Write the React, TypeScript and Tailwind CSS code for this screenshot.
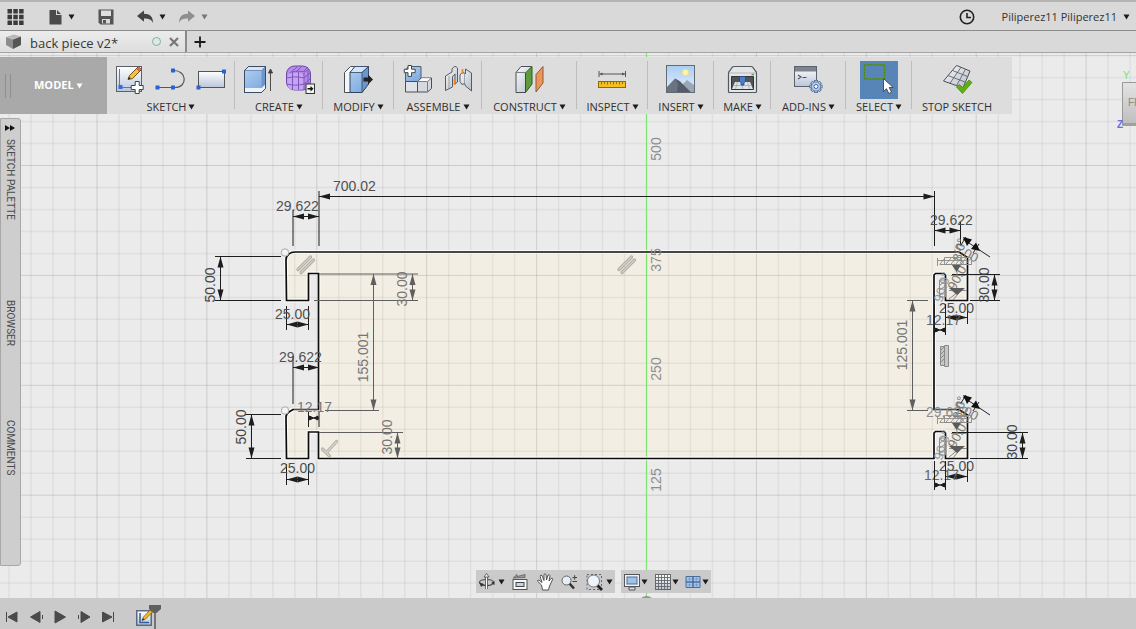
import React from "react";

const Caret = ({ className = "fill-[#1c1c1c]" }: { className?: string }) => (
  <svg width="7" height="6" viewBox="0 0 7 6" className={className} aria-hidden="true">
    <path d="M.5 .5h6l-3 5z" />
  </svg>
);

const Icon = ({ children, size = 32 }: { children: React.ReactNode; size?: number }) => (
  <svg width={size} height={size} viewBox={`0 0 ${size} ${size}`} fill="none" aria-hidden="true" className="block shrink-0">
    {children}
  </svg>
);

const Gradients = () => (
  <svg width="0" height="0" className="absolute" aria-hidden="true">
    <defs>
      <linearGradient id="paper" x1="0" y1="0" x2="0" y2="1">
        <stop offset="0" stopColor="#ffffff" />
        <stop offset="1" stopColor="#b9c6da" />
      </linearGradient>
      <linearGradient id="blue" x1="0" y1="0" x2="0.6" y2="1">
        <stop offset="0" stopColor="#b4d0f2" />
        <stop offset="1" stopColor="#7fabdf" />
      </linearGradient>
      <linearGradient id="steel" x1="0" y1="0" x2="1" y2="1">
        <stop offset="0" stopColor="#fafbfc" />
        <stop offset="1" stopColor="#b4bcc6" />
      </linearGradient>
      <linearGradient id="sky" x1="0" y1="0" x2="0" y2="1">
        <stop offset="0" stopColor="#a9cdf3" />
        <stop offset="1" stopColor="#e6f1fb" />
      </linearGradient>
      <linearGradient id="cube" x1="0" y1="0" x2="0" y2="1">
        <stop offset="0" stopColor="#e4e4e4" />
        <stop offset="1" stopColor="#bcbcbc" />
      </linearGradient>
    </defs>
  </svg>
);

/* ---------- ribbon icons ---------- */

const CreateSketch = () => (
  <Icon>
    <rect x="2.500" y="2.500" width="25" height="25" fill="url(#paper)" stroke="#5b6069" />
    <path d="M5.500 5v18.500H20" stroke="#6f757f" />
    <rect x="4.500" y="21" width="4" height="4" fill="#2e6fe0" />
    <path d="M14 15.500l1.500-4L24 3l3 3-8.500 8.500z" fill="#f5c23a" stroke="#5b4412" strokeWidth=".9" />
    <path d="M22.500 4.500L24.500 2.500l3 3-2 2z" fill="#e06a5a" stroke="#6d2e26" strokeWidth=".6" />
    <path d="M14 15.500l1-2.700 1.700 1.700z" fill="#222" />
    <path d="M21.200 17.500h4v4h4v4h-4v4h-4v-4h-4v-4h4z" fill="#fff" stroke="#444" />
  </Icon>
);

const ArcTool = () => (
  <Icon>
    <path d="M3 23.500h17c13 0 12-17.500-1.500-17" stroke="#54585f" strokeWidth="1.200" />
    <path d="M.5 21.500h4v4h-4zM16 21.500h4v4h-4zM16 4.500h4v4h-4z" fill="#2a62cf" />
  </Icon>
);

const RectTool = () => (
  <Icon>
    <rect x="2.500" y="7.500" width="26" height="16" fill="url(#paper)" stroke="#50545b" />
    <path d="M.5 21.500h4v4h-4zM26 5.500h4v4h-4z" fill="#2a62cf" />
  </Icon>
);

const Extrude = () => (
  <Icon>
    <path d="M1.500 6.500l4-4h17v22l-4 4h-17z" fill="url(#blue)" stroke="#30445f" />
    <path d="M2 24h16.500l4-4v4.500l-4 3.500H2z" fill="#eef3f9" />
    <path d="M1.500 6.500l4-4h17l-4 4z" fill="#d6e6fa" stroke="#5a7190" strokeWidth=".7" />
    <path d="M18.500 6.500l4-4V20l-4 4z" fill="#6d97cb" />
    <path d="M1.500 6.500l4-4h17v22l-4 4h-17z" stroke="#3b4c64" />
    <path d="M27.500 27V6M25.500 9l2-4 2 4z" stroke="#3d3d3d" fill="#3d3d3d" strokeWidth=".9" />
  </Icon>
);

const FormTool = () => (
  <Icon>
    <rect x="2.500" y="2" width="24" height="24" rx="8" fill="#b58cea" stroke="#6c45a6" />
    <path d="M3 15q0-6 5-6h7q5 0 5 6v10q-8 2-14 0-3-2-3-10z" fill="#c7a3f5" />
    <path d="M3 14c6-1.500 11-1.500 17 0l6-5M3 20c6 1.500 11 1.500 17 0l6-5M8 8c5-1 8-1 13 0l4-3M8.500 8v18M14.500 8v18M20 9v17M24 6v17M6 9l7-6M12 8l6-6M19 8l5-5" stroke="#7d56b8" />
    <rect x="22" y="20" width="8.500" height="9.500" fill="#f3f3f3" stroke="#333" />
    <path d="M23.500 24h3v-2l3 2.800-3 2.800v-2h-3z" fill="#111" />
  </Icon>
);

const PressPull = () => (
  <Icon>
    <path d="M1.500 8.500l6-6h5l-5 6v20h-6z" fill="#f4f6f8" stroke="#4a4f57" />
    <path d="M7 8.500l5-6h13.500V20l-6.500 8.500H7z" fill="url(#blue)" stroke="#30445f" />
    <path d="M7 8.500l5-6h13.500l-6.500 6z" fill="#d6e6fa" stroke="#30445f" strokeWidth=".8" />
    <path d="M19 8.500l6.500-6V20L19 28.500z" fill="#6d97cb" stroke="#30445f" strokeWidth=".8" />
    <path d="M20.500 13.500h4.500V10.500l5 5-5 5v-3h-4.500z" fill="#222" />
  </Icon>
);

const NewComponent = () => (
  <Icon>
    <path d="M3.500 6l3-3.500H19v11l-2 4H3.500z" fill="url(#blue)" stroke="#4a5a70" />
    <path d="M3.500 17.500h12v10.500h-12z" fill="#dfe2e7" stroke="#4a4f57" />
    <path d="M15.500 17.500l4-3.500h10v10.500l-4 3.500h-10z" fill="#d6dae0" stroke="#4a4f57" />
    <path d="M15.500 17.500h10l4-3.500M25.500 17.500V28" stroke="#7a8089" />
    <path d="M16.500 17l3.500-2.700h8.500L25 17z" fill="#fff" />
    <path d="M6 1.500h3.500v3.700h3.700v3.500H9.500v3.700H6V8.700H2.300V5.200H6z" fill="#fff" stroke="#444" />
  </Icon>
);

const Joint = () => (
  <Icon>
    <path d="M2.500 12l6.500-4V5q3-4.500 5.500-1V18l-2.500 2V10L9.500 13v10L2.500 26.500z" fill="url(#steel)" stroke="#555b64" />
    <path d="M17 11q2-4 4.500-2l1 1V5l6 4v18L22 21.500V19.500l-3 1-2-3z" fill="url(#steel)" stroke="#555b64" />
    <path d="M11.500 15v6M19.500 5v5" stroke="#ef8a2c" strokeWidth="1.800" />
    <path d="M21.500 10v11M6 12v12" stroke="#8a919a" strokeWidth=".8" />
  </Icon>
);

const Construct = () => (
  <Icon>
    <path d="M2 8.500l5-6h11L11.500 8.500v20H2z" fill="url(#steel)" stroke="#4a4f57" />
    <path d="M11.500 8.500L18 2.500V20l-6.500 8.500z" fill="#5c9c3f" stroke="#33581f" />
    <path d="M2 8.500h9.500L17.500 2.500" stroke="#7a8089" />
    <path d="M22 10.500l7-8V19l-7 9z" fill="#ef955a" stroke="#8b5a38" />
  </Icon>
);

const Inspect = () => (
  <Icon>
    <path d="M2 7v6M28.500 7v6M2.500 10h26" stroke="#555" />
    <path d="M2.500 10l3-1.500v3zM28 10l-3-1.500v3z" fill="#555" />
    <rect x="1.500" y="17.500" width="27" height="6" fill="#f5c01e" stroke="#8d6a0a" />
    <path d="M4.500 18v2.500M7.500 18v2M10.500 18v2.500M13.500 18v2M16.500 18v2.500M19.500 18v2M22.500 18v2.500M25.500 18v2" stroke="#8a6a10" strokeWidth=".9" />
  </Icon>
);

const InsertImage = () => (
  <Icon>
    <rect x="1.500" y="1.500" width="28" height="27" fill="url(#sky)" stroke="#646a73" />
    <circle cx="20.500" cy="8.500" r="3.200" fill="#fff3b0" stroke="#f0d873" strokeWidth=".8" />
    <path d="M14 24l8-8 7 5v7H14z" fill="#9aa7b8" />
    <path d="M2 23l8-8.500 5 3L26 28H2z" fill="#6a7382" />
    <path d="M10 14.500l3 5-1 8.500h13L15 17.500z" fill="#545c6a" />
  </Icon>
);

const Make = () => (
  <Icon>
    <path d="M1.500 9.500q0-1.500 1-2.500l3-4q.6-.5 1.500-.5h17q.9 0 1.500.5l3 4q1 1 1 2.500v18q0 1-1 1h-26q-1 0-1-1z" fill="#e3e5e8" stroke="#55595f" strokeWidth="1.200" />
    <path d="M2 9h27" stroke="#b4b8bd" />
    <path d="M4.500 12.500h22v13h-22z" fill="#50545a" stroke="#333" />
    <path d="M8 18h15l3 7H5z" fill="#dfe3e8" />
    <path d="M10.500 18l-2 7M15.500 18v7M20.500 18l2 7M7 21.500h17" stroke="#9aa0a8" strokeWidth=".7" />
    <path d="M12.500 12.500h6v5l-1.500 1V21h-3v-2.500l-1.500-1z" fill="#4a7fd0" stroke="#254577" strokeWidth=".8" />
    <rect x="24.500" y="9.800" width="2.500" height="1.500" fill="#4caf2a" />
  </Icon>
);

const AddIns = () => (
  <Icon>
    <rect x="1.500" y="2.500" width="22" height="20" fill="url(#paper)" stroke="#5d636c" />
    <rect x="2" y="3" width="21" height="4.500" fill="#7d848e" />
    <path d="M5 11l3 2-3 2M9.500 13.500h4" stroke="#555" strokeWidth="1.200" />
    <path d="M23 16v13M16.500 22.500h13M18.400 17.900l9.200 9.200M27.600 17.900l-9.200 9.200" stroke="#44618d" strokeWidth="3.600" />
    <path d="M23 16.700v11.600M17.200 22.500h11.600M18.900 18.400l8.200 8.200M27.100 18.400l-8.200 8.200" stroke="#bcd3f2" strokeWidth="2.200" />
    <circle cx="23" cy="22.500" r="4.500" fill="#bcd3f2" stroke="#44618d" strokeWidth=".7" />
    <circle cx="23" cy="22.500" r="2" fill="#fff" stroke="#44618d" />
  </Icon>
);

const Select = () => (
  <Icon>
    <rect x="1.500" y="1" width="20" height="14" stroke="#5b9226" strokeWidth="1.700" />
    <path d="M1.500 1h20v14h-20z" stroke="#41701a" strokeDasharray="1 2" strokeWidth=".6" />
    <path d="M20.500 14.500v13l3-2.800 2.300 4.800 2.700-1.300-2.300-4.700h4z" fill="#fff" stroke="#444" strokeWidth=".9" />
  </Icon>
);

const StopSketch = () => (
  <Icon>
    <path d="M15.500 1.500L29 7 22 24 2.500 17z" fill="url(#steel)" stroke="#4a4f56" />
    <path d="M20 3.300L9 19.300M24.500 5.200L15.500 21.700M11.500 6.500l15 6M7 11.500l17 6.500" stroke="#5d636b" strokeWidth=".9" />
    <path d="M15.500 23l3-2.500 3 3L28 16l3 2.500L21.500 29.500z" fill="#5fae12" stroke="#4b8c0e" strokeWidth=".8" />
  </Icon>
);

type Tool = { name: string; icon: React.ReactNode; active?: boolean };
type Group = { label: string; width: string; menu: boolean; tools: Tool[] };

const groups: Group[] = [
  {
    label: "SKETCH",
    width: "w-32",
    menu: true,
    tools: [
      { name: "Create sketch", icon: <CreateSketch /> },
      { name: "Line", icon: <ArcTool /> },
      { name: "Rectangle", icon: <RectTool /> },
    ],
  },
  {
    label: "CREATE",
    width: "w-[88px]",
    menu: true,
    tools: [
      { name: "Extrude", icon: <Extrude /> },
      { name: "Form", icon: <FormTool /> },
    ],
  },
  { label: "MODIFY", width: "w-[71px]", menu: true, tools: [{ name: "Press pull", icon: <PressPull /> }] },
  {
    label: "ASSEMBLE",
    width: "w-[88px]",
    menu: true,
    tools: [
      { name: "New component", icon: <NewComponent /> },
      { name: "Joint", icon: <Joint /> },
    ],
  },
  { label: "CONSTRUCT", width: "w-[95px]", menu: true, tools: [{ name: "Offset plane", icon: <Construct /> }] },
  { label: "INSPECT", width: "w-[71px]", menu: true, tools: [{ name: "Measure", icon: <Inspect /> }] },
  { label: "INSERT", width: "w-[66px]", menu: true, tools: [{ name: "Attached canvas", icon: <InsertImage /> }] },
  { label: "MAKE", width: "w-[57px]", menu: true, tools: [{ name: "3D print", icon: <Make /> }] },
  { label: "ADD-INS", width: "w-[75px]", menu: true, tools: [{ name: "Scripts and add-ins", icon: <AddIns /> }] },
  { label: "SELECT", width: "w-[66px]", menu: true, tools: [{ name: "Select", icon: <Select />, active: true }] },
  { label: "STOP SKETCH", width: "w-[90px]", menu: false, tools: [{ name: "Stop sketch", icon: <StopSketch /> }] },
];

const RibbonGroup = ({ group, last }: { group: Group; last: boolean }) => (
  <div className={`${group.width} relative flex shrink-0 flex-col items-center pt-1`}>
    <div className="flex h-[38px] items-center gap-[9px]">
      {group.tools.map((t) => (
        <button
          key={t.name}
          type="button"
          aria-label={t.name}
          className={t.active ? "flex size-[38px] items-center justify-center bg-[#5785b8]" : "block"}
        >
          {t.icon}
        </button>
      ))}
    </div>
    <button type="button" className="mt-0.5 flex items-center gap-0.5 text-[11px] leading-3 whitespace-nowrap text-[#303030]">
      {group.label}
      {group.menu && <Caret />}
    </button>
    {!last && <span className="absolute top-1 right-0 h-12 w-px bg-[#bdbdbd]" />}
  </div>
);

/* ---------- sketch drawing ---------- */

const dark = "#1d1d1d";
const soft = "#5f5f5f";

const Arrow = ({ x, y, angle, color }: { x: number; y: number; angle: number; color: string }) => (
  <path d="M0 0l-11-3v6z" fill={color} transform={`translate(${x} ${y}) rotate(${angle})`} />
);

type HProps = { x1: number; x2: number; y: number; label: string; tx: number; ty: number; e1?: [number, number]; e2?: [number, number]; color?: string };
const HDim = ({ x1, x2, y, label, tx, ty, e1, e2, color = dark }: HProps) => (
  <g>
    <path
      d={`M${x1} ${y}H${x2}${e1 ? `M${x1} ${e1[0]}V${e1[1]}` : ""}${e2 ? `M${x2} ${e2[0]}V${e2[1]}` : ""}`}
      stroke={color}
      fill="none"
    />
    <Arrow x={x1} y={y} angle={180} color={color} />
    <Arrow x={x2} y={y} angle={0} color={color} />
    <text x={tx} y={ty} fill={color === dark ? "#505050" : "#7c7c7c"}>
      {label}
    </text>
  </g>
);

type VProps = { x: number; y1: number; y2: number; label: string; tx: number; ty: number; e1?: [number, number]; e2?: [number, number]; color?: string };
const VDim = ({ x, y1, y2, label, tx, ty, e1, e2, color = dark }: VProps) => (
  <g>
    <path
      d={`M${x} ${y1}V${y2}${e1 ? `M${e1[0]} ${y1}H${e1[1]}` : ""}${e2 ? `M${e2[0]} ${y2}H${e2[1]}` : ""}`}
      stroke={color}
      fill="none"
    />
    <Arrow x={x} y={y1} angle={-90} color={color} />
    <Arrow x={x} y={y2} angle={90} color={color} />
    <text transform={`translate(${tx} ${ty}) rotate(-90)`} textAnchor="middle" fill={color === dark ? "#444" : "#767676"}>
      {label}
    </text>
  </g>
);

const ShortDim = ({ x1, x2, y, top, bottom }: { x1: number; x2: number; y: number; top: number; bottom: number }) => (
  <path
    d={`M${x1} ${top}V${bottom}M${x2} ${top}V${bottom}M${x1} ${y}H${x2}M${x1 + 1} ${y - 2}v4l4-2zM${x2 - 1} ${y - 2}v4l-4-2z`}
    stroke={dark}
    fill={dark}
  />
);

const profile =
  "M295 252H959L967.500 257.500V300.500H945.500V275L944 273.500H935.500L934 275V409.500H959L967.500 415V458.500H945.500V433L944 431.500H935.500L934 433V458.500H318.500V432H308.500V458.500H286.500L286 417Q286 414 289 412L293 409.500H318.500V273.500H308.500V300.500H286.500L286 260Q286 256 289 254Q291 252 295 252Z";

const ParallelMark = ({ x, y }: { x: number; y: number }) => (
  <g transform={`translate(${x} ${y})`} strokeLinecap="round">
    <path d="M-7 5.500L5.500-7M-4 8.500L8.500-4" stroke="#b0ada5" strokeWidth="3.200" />
    <path d="M-7 5.500L5.500-7M-4 8.500L8.500-4" stroke="#d3d0c8" strokeWidth="1.200" />
  </g>
);

const CornerDetail = ({ dy }: { dy: number }) => (
  <g transform={`translate(0 ${dy})`}>
    <g fill="#777" fontSize="13">
      <text transform="translate(961 262) rotate(-76)">8.0°</text>
      <text transform="translate(953 251) rotate(28)">5.00</text>
      <text transform="translate(955 291) rotate(-62)">90.0°</text>
      <text transform="translate(942 303) rotate(-72)" fill="#999">
        90.0°
      </text>
    </g>
    <g stroke="#8a8a8a" fill="none">
      <path
        d="M937.500 260.500h30M939.500 264.500h32M944.500 257.500h27v7h-27zM940 264l5-6M946 264l5-6M951 264l5-6M956 264l5-6M961 264l5-6M966 264l5-6M937.500 258v8"
        strokeWidth=".9"
      />
      <path d="M939.500 280v17h6v-17zM940 285l5-4M940 290l5-4M940 295l5-4" />
      <path d="M957 264v11M949 290.500h18M949 299l14-11M953 300l10-12M951 275.500h15" />
    </g>
    <path d="M952 265h9l-4.500 7zM949 288h16l-8 7z" fill="#5b5b5b" />
    <path d="M963 239l27 18M961 245l5-8M973 253l6-9" stroke="#222" />
    <path d="M963 237l9 2.500-5 6.500zM980 251l-9-2 5-6.500z" fill="#111" />
  </g>
);

const SketchCanvas = () => {
  const s = 21.98;
  const cols = Array.from({ length: 52 }, (_, i) => i - 4);
  const rows = Array.from({ length: 26 }, (_, i) => i - 5);
  return (
    <svg
      viewBox="0 53 1136 545"
      preserveAspectRatio="xMidYMid slice"
      className="absolute inset-0 h-full w-full bg-[#ebebeb] font-['Liberation_Sans',Arial,sans-serif]"
      fontSize="14"
      fill="none"
      role="img"
      aria-label="Sketch"
    >
      <path d={profile} fill="#f3eee3" />
      <g stroke="#000">
        {cols.map((i) => (
          <path key={i} d={`M${97 + i * s} 53V598`} strokeOpacity={i % 5 === 0 ? 0.13 : 0.05} strokeWidth={i % 5 === 0 ? 1 : 1.5} />
        ))}
        {rows.map((i) => (
          <path key={i} d={`M0 ${165.5 + i * s}H1136`} strokeOpacity={i % 5 === 0 ? 0.13 : 0.05} strokeWidth={i % 5 === 0 ? 1 : 1.5} />
        ))}
      </g>
      <path d="M646.500 53V598" stroke="#7be66e" strokeWidth="1.200" />
      <path d="M641 598q5.500-4 11 0z" fill="#8d9a8d" />
      <path d={profile} stroke="#fff" strokeWidth="4" strokeOpacity=".75" />
      <path d={profile} stroke="#0b0b0b" strokeWidth="1.700" />
      <path d="M294 409.500h24M935 409.500h22" stroke="#24539f" strokeWidth="1.200" />

      <g fill="#8e8e8e">
        {[
          ["500", 149],
          ["375", 260],
          ["250", 369],
          ["125", 480],
        ].map(([t, y]) => (
          <text key={t} transform={`translate(661 ${y}) rotate(-90)`} textAnchor="middle">
            {t}
          </text>
        ))}
      </g>

      <HDim x1={319} x2={934.5} y={196.5} label="700.02" tx={333} ty={191} e1={[191, 246]} e2={[191, 246]} />
      <HDim x1={293} x2={319} y={216.5} label="29.622" tx={276} ty={211} e1={[210, 246]} />
      <VDim x={220.5} y1={256.5} y2={300.5} label="50.00" tx={215} ty={285} e1={[215, 281]} e2={[215, 281]} />
      <HDim x1={286.5} x2={308.5} y={324.5} label="25.00" tx={275} ty={319} e1={[306, 330]} e2={[306, 330]} />
      <VDim x={412.5} y1={274} y2={300.5} label="30.00" tx={407} ty={289} e1={[319, 418]} e2={[314, 418]} color={soft} />
      <VDim x={373.5} y1={274} y2={410.5} label="155.001" tx={368} ty={357} e2={[325, 379]} color={soft} />
      <HDim x1={293} x2={319} y={367.5} label="29.622" tx={279} ty={362} e1={[356, 404]} />
      <text x="297" y="412" fill="#777">
        12.17
      </text>
      <ShortDim x1={308.5} x2={319} y={418} top={412} bottom={427} />
      <VDim x={251.5} y1={414.5} y2={458.5} label="50.00" tx={246} ty={427} e1={[245, 281]} e2={[246, 281]} />
      <HDim x1={286.5} x2={308.5} y={479.5} label="25.00" tx={280} ty={473} e1={[464, 485]} e2={[464, 485]} />
      <VDim x={397.5} y1={432.5} y2={458.5} label="30.00" tx={392} ty={437} e1={[319, 403]} color={soft} />

      <VDim x={912.5} y1={300.5} y2={410.5} label="125.001" tx={907} ty={345} e1={[907, 928]} e2={[907, 928]} color={soft} />
      <HDim x1={934.5} x2={960.5} y={230.5} label="29.622" tx={930} ty={225} e2={[222, 246]} />
      <VDim x={994.5} y1={274.5} y2={300.5} label="30.00" tx={989} ty={285} e1={[952, 1000]} e2={[970, 1000]} />
      <HDim x1={945.5} x2={967.5} y={317.5} label="25.00" tx={939} ty={313} e2={[304, 324]} />
      <text x="926" y="325" fill="#666">
        12.17
      </text>
      <ShortDim x1={934.5} x2={945.5} y={330} top={304} bottom={335} />
      <VDim x={1022.5} y1={432.5} y2={458.5} label="30.00" tx={1017} ty={442} e1={[952, 1028]} e2={[970, 1028]} />
      <HDim x1={945.5} x2={967.5} y={476.5} label="25.00" tx={939} ty={471} e2={[462, 482]} />
      <text x="924" y="480" fill="#666">
        12.17
      </text>
      <ShortDim x1={934.5} x2={945.5} y={485} top={461} bottom={490} />
      <text x="926" y="417" fill="#8d8d8d">
        29.622
      </text>
      <CornerDetail dy={0} />
      <CornerDetail dy={158} />

      <circle cx="285" cy="252.500" r="3.700" fill="#f4f4f4" stroke="#a9a9a9" />
      <circle cx="285" cy="410.500" r="3.700" fill="#f4f4f4" stroke="#a9a9a9" />
      <ParallelMark x={305} y={264} />
      <ParallelMark x={626} y={264} />
      <g strokeLinecap="round">
        <path d="M322.500 449l7 7M326.500 452.500L336.500 441.500" stroke="#b3b0a8" strokeWidth="3.200" />
        <path d="M322.500 449l7 7M326.500 452.500L336.500 441.500" stroke="#d6d3cb" strokeWidth="1.200" />
      </g>
      <path d="M940.500 346.500h4v19h-4zM944.500 345.500h4v21h-4zM941 350l3-3M941 354l3-3M941 358l3-3M941 362l3-3" fill="#c6c6c6" stroke="#8b8b8b" />
    </svg>
  );
};

/* ---------- view controls ---------- */

const Orbit = () => (
  <Icon size={18}>
    <ellipse cx="8.500" cy="9.500" rx="7" ry="3" stroke="#444" strokeWidth="1.200" />
    <path d="M8.500 3v13" stroke="#444" strokeWidth="2.800" />
    <path d="M8.500 2v14" stroke="#fff" strokeWidth="1.300" />
    <path d="M8.500 .5l2.500 3.500H6z" fill="#fff" stroke="#444" strokeWidth=".8" />
    <path d="M1.500 9.500l4.500 1.500-3 3zM16.500 8v4l-3.500-2z" fill="#333" />
  </Icon>
);
const LookAt = () => (
  <Icon size={18}>
    <rect x="1" y="6.500" width="14" height="10" fill="#f6f6f6" stroke="#555" />
    <rect x="4" y="9.500" width="8" height="4" fill="#c3d3ea" stroke="#444" />
    <path d="M1 5l4-3.500v2l8-2v3z" fill="#999" stroke="#555" strokeWidth=".7" />
  </Icon>
);
const Pan = () => (
  <Icon size={18}>
    <path
      d="M4.500 12L.8 8.500Q0 7 1.800 7L5 9.500 3.200 3.500q0-2 1.800-1l2 5L7 1.500q1-1.500 2 0L9.500 7l1.500-4.800q1.500-1.200 2 .5L12 8l2-2.500q1.700-.8 1.700.8L12.500 13l-1 4H5.500z"
      fill="#fff"
      stroke="#444"
      strokeWidth=".9"
    />
  </Icon>
);
const Zoom = () => (
  <Icon size={18}>
    <path d="M8 10l5 5.500" stroke="#333" strokeWidth="2.600" />
    <circle cx="5.500" cy="7.500" r="4.500" fill="#e6eef8" stroke="#666" />
    <path d="M11.500 4.500h4.500M13.700 2.200v4.500M11.500 8.500h4.500" stroke="#444" />
  </Icon>
);
const ZoomWindow = () => (
  <Icon size={18}>
    <path d="M1 1.500h14.500v15H1z" stroke="#666" strokeDasharray="2 2" />
    <path d="M11 12l5 5" stroke="#222" strokeWidth="2.800" />
    <circle cx="7.500" cy="8" r="6" fill="#eef4fb" stroke="#777" />
  </Icon>
);
const Display = () => (
  <Icon size={18}>
    <path d="M6 14h6v3H6z" fill="#ddd" stroke="#555" />
    <rect x="1.500" y="1.500" width="15" height="12" fill="#f2f2f2" stroke="#555" />
    <rect x="4" y="4" width="10" height="7" fill="#a3c2ea" stroke="#4a6c9c" />
  </Icon>
);
const GridIcon = () => (
  <Icon size={18}>
    <rect x="1.500" y="1.500" width="15" height="15" fill="url(#paper)" stroke="#666" />
    <path d="M4.500 2v14M7.500 2v14M10.500 2v14M13.500 2v14M2 4.500h14M2 7.500h14M2 10.500h14M2 13.500h14" stroke="#666" strokeWidth=".9" />
  </Icon>
);
const Viewports = () => (
  <Icon size={18}>
    <path d="M2 3.500h14v11H2z" fill="#a3c4ee" stroke="#4a6c98" />
    <path d="M9 3v12M2 9h14" stroke="#4a6c98" strokeWidth="1.500" />
    <path d="M3.500 6H7.500M5.500 4.500v3M10.500 6h4M12.500 4.500v3M3.500 12h4M5.500 10.500v3M10.500 12h4M12.500 10.500v3" stroke="#6f93c4" strokeWidth=".8" />
  </Icon>
);

const ViewButton = ({ name, menu, children }: { name: string; menu?: boolean; children: React.ReactNode }) => (
  <button type="button" aria-label={name} className="flex items-center">
    {children}
    {menu && <Caret />}
  </button>
);

/* ---------- timeline ---------- */

const playback = [
  { name: "Go to start", d: "M2.500 3v10M13 3v10L4 8z" },
  { name: "Step back", d: "M12 2.500v11L2.500 8zM14.500 6v4" },
  { name: "Play", d: "M3 2v12l10.500-6z" },
  { name: "Step forward", d: "M5 2.500v11L14 8zM2.500 6v4" },
  { name: "Go to end", d: "M13.500 3v10M2.500 3v10L12 8z" },
];

export default function App() {
  return (
    <div className="flex min-h-screen flex-col overflow-hidden bg-[#ebebeb] font-['Open_Sans','Noto_Sans',sans-serif] text-[#2b2b2b]">
      <Gradients />

      <header className="flex h-[31px] items-center justify-between border-t-2 border-b border-t-[#b4b4b4] border-b-[#8c8c8c] bg-[#d9d9d9] pt-0.5 pr-1.5 pl-1.5">
        <div className="flex items-center gap-[22px]">
          <button type="button" aria-label="Data panel">
            <Icon size={18}>
              <path
                d="M1.500 1h4.500v4.500H1.500zM7.300 1h4.500v4.500H7.300zM13.100 1h4.500v4.500h-4.500zM1.500 6.800h4.500v4.500H1.500zM7.300 6.800h4.500v4.500H7.300zM13.100 6.800h4.500v4.500h-4.500zM1.500 12.600h4.500v4.500H1.500zM7.300 12.600h4.500v4.500H7.300zM13.100 12.600h4.500v4.500h-4.500z"
                fill="#3a3a3a"
              />
            </Icon>
          </button>
          <button type="button" aria-label="File" className="flex items-center gap-1.5">
            <Icon size={16}>
              <path d="M3.500 1h6.500v5h5.500v9.500h-12z" fill="#4a4a4a" />
              <path d="M11 1l4 4h-4z" fill="#4a4a4a" />
            </Icon>
            <Caret />
          </button>
          <button type="button" aria-label="Save">
            <Icon size={18}>
              <path d="M1.500 1.500h15v15h-13l-2-2z" fill="#555" />
              <path d="M4 2.500h10V8H4z" fill="#e0e0e0" />
              <path d="M5 11h8v4.500H5z" fill="#d9d9d9" />
              <path d="M6 12h3v3.500H6z" fill="#555" />
            </Icon>
          </button>
          <div className="flex items-center gap-[13px]">
            <button type="button" aria-label="Undo" className="flex items-center gap-[5px]">
              <svg width="17" height="16" viewBox="0 0 17 16" aria-hidden="true">
                <path d="M0 7l7-5.500v3.300c6 0 9 3 9 9.200-1.500-3.500-4-4.500-9-4.500v3.200z" fill="#444" />
              </svg>
              <Caret />
            </button>
            <button type="button" aria-label="Redo" className="flex items-center gap-[5px]">
              <svg width="17" height="16" viewBox="0 0 17 16" aria-hidden="true">
                <path d="M16 7l-7-5.500v3.300c-6 0-9 3-9 9.200 1.500-3.500 4-4.500 9-4.500v3.200z" fill="#8f8f8f" />
              </svg>
              <Caret className="fill-[#777]" />
            </button>
          </div>
        </div>
        <div className="flex items-center gap-[27px]">
          <button type="button" aria-label="Job status">
            <Icon size={16}>
              <circle cx="8" cy="8" r="6.700" stroke="#222" strokeWidth="1.600" />
              <path d="M8 4v4.500h4" stroke="#222" strokeWidth="1.600" />
            </Icon>
          </button>
          <button type="button" className="flex items-center gap-1.5 text-[11px] leading-4 text-[#333]">
            Piliperez11 Piliperez11
            <Caret />
          </button>
        </div>
      </header>

      <div className="flex h-[22px] border-b border-[#a3a3a3] bg-[#d9d9d9]">
        <div className="flex w-[187px] shrink-0 items-center border-r-2 border-[#8a8a8a] bg-linear-to-b from-[#ececec] to-[#dedede] pr-1.5 pl-1.5">
          <Icon size={16}>
            <path d="M0 3l8-2.500 7 2L7 5z" fill="#b9b9b9" />
            <path d="M0 3l7 2.500V15l-7-4z" fill="#8d8d8d" />
            <path d="M7 5.500l8-3V11l-8 4z" fill="#565656" />
          </Icon>
          <button type="button" className="ml-2 flex-1 pt-0.5 text-left text-[13px] leading-5 whitespace-nowrap text-[#383838]">
            back piece v2*
          </button>
          <span className="mr-2 size-[9px] rounded-full border border-[#6fb8ab]" />
          <button type="button" aria-label="Close tab">
            <Icon size={10}>
              <path d="M1 1l8 8M9 1L1 9" stroke="#777" strokeWidth="2.200" />
            </Icon>
          </button>
        </div>
        <button type="button" aria-label="New tab" className="ml-[7px]">
          <Icon size={12}>
            <path d="M6 .5v11M.5 6h11" stroke="#1a1a1a" strokeWidth="1.800" />
          </Icon>
        </button>
      </div>

      <main className="relative flex flex-1 flex-col items-start pt-1">
        <SketchCanvas />

        <div className="relative flex h-[57px] bg-[#dddddd] pr-[10px]">
          <button type="button" className="flex w-[107px] shrink-0 items-center bg-[#a9a9a9] pl-[5px] text-[11px] font-bold text-white">
            <span className="mr-[23px] h-6 w-1.5 border-x border-[#8e8e8e]" />
            MODEL
            <span className="ml-0.5 flex">
              <Caret className="fill-white" />
            </span>
          </button>
          {groups.map((g, i) => (
            <RibbonGroup key={g.label} group={g} last={i === groups.length - 1} />
          ))}
        </div>

        <aside className="relative mt-1 mb-8 flex w-[21px] flex-1 flex-col items-center rounded-r-[3px] border border-[#a8a8a8] bg-[#cecece] pt-1 pr-0.5 font-['Roboto',sans-serif] text-[10px] leading-3 text-[#4a4a4a]">
          <button type="button" aria-label="Expand panels">
            <svg width="12" height="10" viewBox="0 0 12 10" aria-hidden="true">
              <path d="M1 2v6l5-3zM6 2v6l5-3z" fill="#111" />
            </svg>
          </button>
          <button type="button" className="mt-1.5 [writing-mode:vertical-rl]">
            SKETCH PALETTE
          </button>
          <button type="button" className="mt-20 [writing-mode:vertical-rl]">
            BROWSER
          </button>
          <button type="button" className="mt-[74px] [writing-mode:vertical-rl]">
            COMMENTS
          </button>
        </aside>

        <div className="absolute top-4 right-0" aria-hidden="true">
          <svg width="20" height="64" viewBox="0 0 20 64" className="block font-['Liberation_Sans',Arial,sans-serif]">
            <path d="M6.500 13.500h14v43h-14z" fill="url(#cube)" stroke="#999" />
            <path d="M7 54h13v3H7z" fill="#a0a0a0" />
            <text x="12" y="37" fontSize="10" fill="#8a8a8a">
              FR
            </text>
            <text x="7" y="10" fontSize="10" fill="#7fe06c">
              Y
            </text>
            <text x="1" y="59" fontSize="10" fontWeight="bold" fill="#6b6bf0">
              Z
            </text>
          </svg>
        </div>

        <div className="absolute bottom-[5px] left-1/2 -ml-[92px] flex gap-1.5">
          <div className="flex h-[23px] w-[139px] items-center justify-between bg-[#cacaca] px-0.5">
            <ViewButton name="Orbit" menu>
              <Orbit />
              <span className="w-0.5" />
            </ViewButton>
            <ViewButton name="Look at">
              <LookAt />
            </ViewButton>
            <ViewButton name="Pan">
              <Pan />
            </ViewButton>
            <ViewButton name="Zoom">
              <Zoom />
            </ViewButton>
            <ViewButton name="Zoom window" menu>
              <ZoomWindow />
              <span className="w-0.5" />
            </ViewButton>
          </div>
          <div className="flex h-[23px] w-[90px] items-center justify-between bg-[#cacaca] px-0.5">
            <ViewButton name="Display settings" menu>
              <Display />
            </ViewButton>
            <ViewButton name="Grid and snaps" menu>
              <GridIcon />
            </ViewButton>
            <ViewButton name="Viewports" menu>
              <Viewports />
            </ViewButton>
          </div>
        </div>
      </main>

      <footer className="relative flex h-[31px] items-end bg-[#cacaca] pl-1">
        <div className="flex gap-2 pb-1">
          {playback.map((p) => (
            <button key={p.name} type="button" aria-label={p.name}>
              <Icon size={16}>
                <path d={p.d} fill="#4a4a4a" stroke="#4a4a4a" strokeWidth="1" />
              </Icon>
            </button>
          ))}
        </div>
        <button type="button" aria-label="Sketch1" className="ml-5">
          <svg width="28" height="25" viewBox="0 0 28 25" fill="none" className="block" aria-hidden="true">
            <path d="M13 1h12v4l-4.500 4h-3L13 5z" fill="#606060" />
            <path d="M19 8v17" stroke="#606060" strokeWidth="1.600" />
            <rect x="0" y="6" width="16" height="16" fill="#5b6a82" />
            <rect x="1.500" y="7.500" width="13" height="13" fill="url(#paper)" />
            <path d="M4 9v9.500h9" stroke="#2e5d9f" strokeWidth="1.500" />
            <path d="M6 16.500l1.500-3.500 6.500-7 2.500 2-7 7z" fill="#f2bb2a" stroke="#6b4b10" strokeWidth=".7" />
            <path d="M6 16.500l1-2.300 1.500 1.300z" fill="#222" />
          </svg>
        </button>
      </footer>
    </div>
  );
}
